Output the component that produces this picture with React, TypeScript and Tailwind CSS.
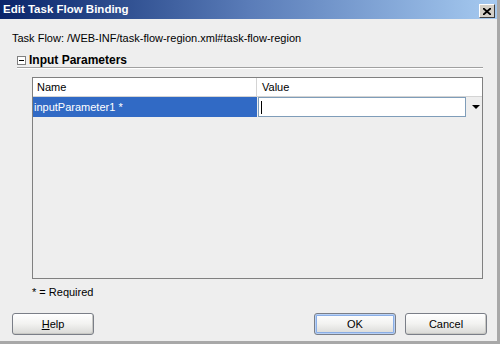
import React from 'react';

const font = { fontFamily: '"Liberation Sans", Arial, sans-serif' };

const XpButton = ({ label, focused = false }: { label: React.ReactNode; focused?: boolean }) => (
  <button
    className={
      'w-[82px] h-[22px] rounded-[3px] border border-[#7a7e87] bg-gradient-to-b from-[#ffffff] via-[#f2f2f0] to-[#d9d9d6] text-[11px] text-black flex items-center justify-center ' +
      (focused ? 'shadow-[inset_0_0_0_1px_#b9d1f5,inset_0_0_0_2px_#8aaee6]' : 'shadow-[inset_-1px_-1px_0_#c8c8c4]')
    }
  >
    {label}
  </button>
);

const App = () => {
  return (
    <div className="w-[500px] h-[344px] bg-[#eeeeee] flex flex-col text-black border-r-[3px] border-b-[3px] border-[#a8a8a8] overflow-hidden" style={font}>
      {/* Title bar */}
      <div className="h-[19px] shrink-0 flex items-center justify-between bg-gradient-to-r from-[#0a246a] via-[#5a7cb8] to-[#a6caf0] pl-[3px] pr-[2px]">
        <span className="text-white font-bold text-[11.5px] leading-none">Edit Task Flow Binding</span>
        <div className="w-[16px] h-[14px] mt-[3px] bg-[#d4d0c8] border border-t-white border-l-white border-r-[#404040] border-b-[#404040] flex items-center justify-center">
          <svg width="8" height="7" viewBox="0 0 8 7">
            <path d="M0 0 L8 7 M8 0 L0 7" stroke="black" strokeWidth="1.8" />
          </svg>
        </div>
      </div>

      {/* Body */}
      <div className="flex-1 flex flex-col pl-[12px] pr-[10px]">
        <div className="mt-[13px] h-[12px] text-[11px] leading-[12px]">Task Flow: /WEB-INF/task-flow-region.xml#task-flow-region</div>

        {/* Section header */}
        <div className="mt-[10px] ml-[5px] flex items-center h-[12px]">
          <div className="w-[9px] h-[9px] border border-[#808080] bg-white flex items-center justify-center">
            <div className="w-[5px] h-[1px] bg-black" />
          </div>
          <span className="ml-[3px] font-bold text-[12px] leading-none">Input Parameters</span>
        </div>
        <div className="mt-[1px] ml-[5px] mr-[4px] h-[2px] border-t border-[#a0a0a0] border-b border-b-white" />

        {/* Table */}
        <div className="mt-[8px] ml-[20px] mr-[4px] h-[202px] border border-[#808080] bg-[#eeeeee] flex flex-col">
          <div className="h-[19px] flex bg-white border-b border-[#d4d4d4] text-[11px]">
            <div className="w-[224px] border-r border-[#d4d4d4] pl-[4px] flex items-center">Name</div>
            <div className="flex-1 pl-[5px] flex items-center">Value</div>
          </div>
          <div className="h-[20px] flex">
            <div className="w-[224px] bg-[#316ac5] text-white text-[11px] flex items-center pl-[1px]">inputParameter1 *</div>
            <div className="flex-1 flex items-center">
              <div className="ml-[1px] w-[208px] h-[20px] bg-white border border-[#7f9db9] flex items-center pl-[2px]">
                <div className="w-[1px] h-[13px] bg-black" />
              </div>
              <svg className="ml-[6px]" width="8" height="5" viewBox="0 0 8 5">
                <path d="M0 0 H8 L4 4 Z" fill="black" />
              </svg>
            </div>
          </div>
        </div>

        <div className="mt-[7px] ml-[20px] text-[11px] leading-[12px]">* = Required</div>

        {/* Buttons */}
        <div className="mt-[15px] flex items-center">
          <XpButton label={<span><span className="underline">H</span>elp</span>} />
          <div className="flex-1" />
          <XpButton label="OK" focused />
          <div className="w-[9px]" />
          <XpButton label="Cancel" />
        </div>
      </div>
    </div>
  );
};

export default App;
